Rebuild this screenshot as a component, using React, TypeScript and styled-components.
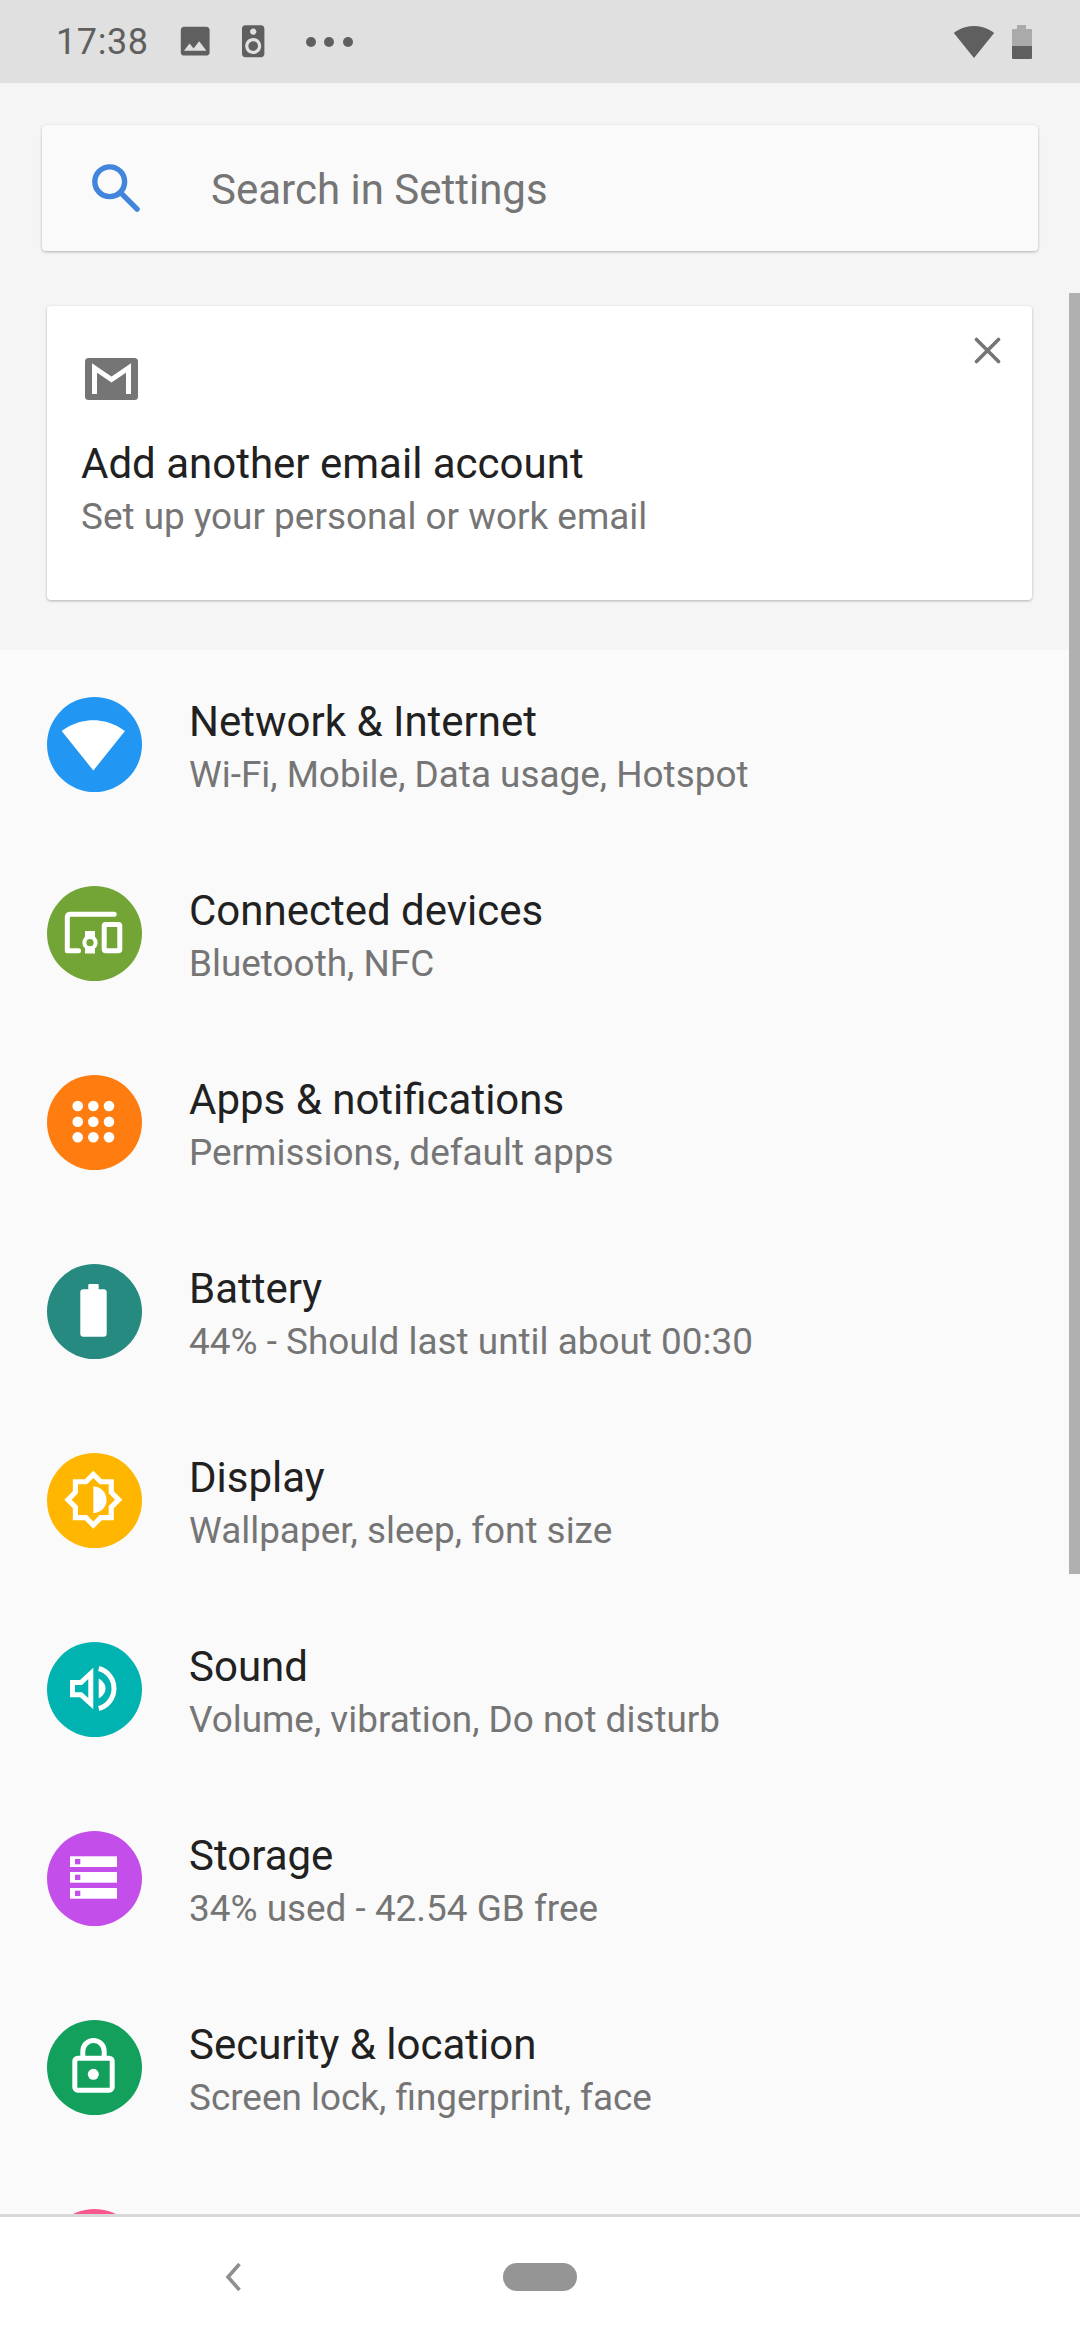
import type { ReactNode } from "react";
import styled, { createGlobalStyle } from "styled-components";

const GlobalStyle = createGlobalStyle`
  html, body {
    margin: 0;
    padding: 0;
    background: #fafafa;
  }

  * {
    box-sizing: border-box;
  }
`;

const Page = styled.div`
  display: flex;
  flex-direction: column;
  width: 1080px;
  height: 2340px;
  overflow: hidden;
  font-family: Roboto, "Liberation Sans", sans-serif;
`;

const StatusBar = styled.header`
  display: flex;
  align-items: center;
  flex-shrink: 0;
  height: 83px;
  padding: 0 48px 0 56px;
  background: #e0e0e0;
  color: #5f5f5f;
`;

const Clock = styled.span`
  width: 120px;
  font-size: 36px;
  letter-spacing: 0.6px;
`;

const StatusIcon = styled.svg`
  display: block;
  width: 38.4px;
  height: 38.4px;
  margin-right: 20px;
  fill: #5f5f5f;
`;

const Dots = styled.div`
  display: flex;
  gap: 8.5px;
  margin-left: 13px;
`;

const Dot = styled.span`
  width: 10px;
  height: 10px;
  border-radius: 50%;
  background: #5f5f5f;
`;

const StatusRight = styled.div`
  display: flex;
  align-items: center;
  gap: 17px;
  margin-left: auto;
`;

const Content = styled.main`
  position: relative;
  flex: 1;
  min-height: 0;
  overflow: hidden;
  background: #fafafa;
`;

const TopSection = styled.section`
  padding: 42px 42px 50px;
  background: #f5f5f5;
`;

const SearchBox = styled.div`
  display: flex;
  align-items: center;
  height: 126px;
  padding-left: 42px;
  background: #fafafa;
  border-radius: 4px;
  box-shadow: 0 1px 3px rgba(0, 0, 0, 0.28);
`;

const SearchIcon = styled.svg`
  display: block;
  flex-shrink: 0;
  width: 65px;
  height: 65px;
  margin-right: 62px;
`;

const Placeholder = styled.span`
  padding-top: 2px;
  font-size: 42px;
  color: #757575;
`;

const Card = styled.article`
  position: relative;
  display: flex;
  flex-direction: column;
  height: 294px;
  margin: 55px 6px 0 5px;
  padding: 52px 34px 0;
  background: #fff;
  border-radius: 4px;
  box-shadow: 0 1px 3px rgba(0, 0, 0, 0.28);
`;

const MailIcon = styled.svg`
  display: block;
  width: 53px;
  height: 42px;
  margin: 0 0 37px 4px;
`;

const CloseIcon = styled.svg`
  position: absolute;
  top: 31px;
  right: 31px;
  width: 27px;
  height: 27px;
`;

const Title = styled.div`
  font-size: 42px;
  line-height: 53px;
  color: #212121;
`;

const Subtitle = styled.div`
  font-size: 36.9px;
  line-height: 54px;
  color: #757575;
`;

const Row = styled.div`
  display: flex;
  align-items: center;
  height: 189px;
  padding-left: 47px;
`;

const Badge = styled.svg<{ $color: string }>`
  display: block;
  flex-shrink: 0;
  width: 95px;
  height: 95px;
  margin-right: 47px;
  border-radius: 50%;
  background: ${(p) => p.$color};
`;

const RowText = styled.div`
  padding-top: 8px;
`;

const ScrollThumb = styled.div`
  position: absolute;
  top: 210px;
  right: 0;
  width: 11px;
  height: 1281px;
  background: #b0b0b0;
`;

const NavBar = styled.nav`
  display: flex;
  align-items: center;
  flex-shrink: 0;
  height: 126px;
  padding: 0 0 3px 225px;
  background: #fff;
  border-top: 3px solid #d8d8d8;
`;

const BackIcon = styled.svg`
  display: block;
  width: 17px;
  height: 28px;
  margin-right: 261px;
`;

const HomePill = styled.span`
  width: 74px;
  height: 28px;
  border-radius: 14px;
  background: #959595;
`;

const mat = "translate(13.7 15) scale(2.72)";

type Item = {
  key: string;
  title?: string;
  sub?: string;
  color: string;
  icon?: ReactNode;
};

const items: Item[] = [
  {
    key: "network",
    title: "Network & Internet",
    sub: "Wi-Fi, Mobile, Data usage, Hotspot",
    color: "#2196f3",
    icon: (
      <path
        transform={mat}
        fill="#fff"
        d="M12.01 21.49L23.64 7c-.45-.34-4.93-4-11.64-4C5.28 3 .81 6.66.36 7l11.63 14.49.01.01.01-.01z"
      />
    ),
  },
  {
    key: "devices",
    title: "Connected devices",
    sub: "Bluetooth, NFC",
    color: "#72a536",
    icon: (
      <>
        <path
          d="M67.2 28.3H23.5Q20.3 28.3 20.3 31.5V64.7H31.5"
          fill="none"
          stroke="#fff"
          strokeWidth="5"
          strokeLinecap="round"
          strokeLinejoin="round"
        />
        <rect x="38" y="45" width="10" height="22.5" fill="#fff" />
        <circle cx="43" cy="56.7" r="7.6" fill="#fff" />
        <circle cx="43" cy="56.7" r="3.6" fill="#72a536" />
        <rect x="57.2" y="38.5" width="15.6" height="26.3" rx="1.5" fill="none" stroke="#fff" strokeWidth="5" />
      </>
    ),
  },
  {
    key: "apps",
    title: "Apps & notifications",
    sub: "Permissions, default apps",
    color: "#ff7d10",
    icon: (
      <g fill="#fff">
        {[31, 46.7, 62.3].map((cy) =>
          [30.7, 46.3, 62].map((cx) => <circle key={`${cx}-${cy}`} cx={cx} cy={cy} r="5.3" />),
        )}
      </g>
    ),
  },
  {
    key: "battery",
    title: "Battery",
    sub: "44% - Should last until about 00:30",
    color: "#268a80",
    icon: (
      <g fill="#fff">
        <rect x="41.3" y="20" width="10.4" height="8" rx="1" />
        <rect x="33.3" y="25.3" width="26.4" height="47.4" rx="3" />
      </g>
    ),
  },
  {
    key: "display",
    title: "Display",
    sub: "Wallpaper, sleep, font size",
    color: "#ffb600",
    icon: (
      <path
        transform="translate(15.6 16) scale(2.56)"
        fill="#fff"
        d="M20 15.31L23.31 12 20 8.69V4h-4.69L12 .69 8.69 4H4v4.69L.69 12 4 15.31V20h4.69L12 23.31 15.31 20H20v-4.69zm-2-.83V18h-3.52L12 20.48 9.52 18H6v-3.52L3.52 12 6 9.52V6h3.52L12 3.52 14.48 6H18v3.52L20.48 12 18 14.48zM12 6.8V17.2c2.87 0 5.2-2.33 5.2-5.2S14.87 6.8 12 6.8z"
      />
    ),
  },
  {
    key: "sound",
    title: "Sound",
    sub: "Volume, vibration, Do not disturb",
    color: "#00b3b0",
    icon: (
      <>
        <path
          fill="#fff"
          fillRule="evenodd"
          d="M23 38H33L46.3 25.7V67.3L33 55.3H23ZM28 43V50.3H35L41.3 56V37L35 43Z"
        />
        <path fill="#fff" d="M51.7 36.5C56 39 58.5 42.5 58.5 46.5C58.5 50.5 56 54 51.7 56.5Z" />
        <path
          fill="none"
          stroke="#fff"
          strokeWidth="5"
          d="M51.7 26.5C60.5 28.5 67 37 67 46.5C67 56 60.5 64.5 51.7 66.5"
        />
      </>
    ),
  },
  {
    key: "storage",
    title: "Storage",
    sub: "34% used - 42.54 GB free",
    color: "#c44eea",
    icon: (
      <>
        {[25.3, 41, 57].map((y) => (
          <g key={y}>
            <rect x="23" y={y} width="47" height="10.7" fill="#fff" />
            <rect x="28" y={y + 2.7} width="5.3" height="5.3" fill="#c44eea" />
          </g>
        ))}
      </>
    ),
  },
  {
    key: "security",
    title: "Security & location",
    sub: "Screen lock, fingerprint, face",
    color: "#12a05c",
    icon: (
      <>
        <rect x="27.8" y="38.2" width="37.4" height="32" rx="3" fill="none" stroke="#fff" strokeWidth="5" />
        <path d="M35.8 37V31.2A10.7 10.7 0 0 1 57.2 31.2V37" fill="none" stroke="#fff" strokeWidth="5" />
        <circle cx="46.3" cy="54.3" r="5.5" fill="#fff" />
      </>
    ),
  },
  // only the top of this badge shows above the nav bar
  { key: "next", color: "#f8588f" },
];

export default function App() {
  return (
    <Page>
      <GlobalStyle />
      <StatusBar>
        <Clock>17:38</Clock>
        <StatusIcon viewBox="0 0 24 24">
          <path d="M21 19V5c0-1.1-.9-2-2-2H5c-1.1 0-2 .9-2 2v14c0 1.1.9 2 2 2h14c1.1 0 2-.9 2-2zM8.5 13.5l2.5 3.01L14.5 12l4.5 6H5l3.5-4.5z" />
        </StatusIcon>
        <StatusIcon viewBox="0 0 24 24">
          <path d="M17 2H7c-1.1 0-2 .9-2 2v16c0 1.1.9 1.99 2 1.99L17 22c1.1 0 2-.9 2-2V4c0-1.1-.9-2-2-2zm-5 2c1.1 0 2 .9 2 2s-.9 2-2 2c-1.11 0-2-.9-2-2s.89-2 2-2zm0 16c-2.76 0-5-2.24-5-5s2.24-5 5-5 5 2.24 5 5-2.24 5-5 5zm0-8c-1.66 0-3 1.34-3 3s1.34 3 3 3 3-1.34 3-3-1.34-3-3-3z" />
        </StatusIcon>
        <Dots>
          <Dot />
          <Dot />
          <Dot />
        </Dots>
        <StatusRight>
          <svg width="42" height="32" viewBox="0 0 23.3 18.5">
            <path
              fill="#5f5f5f"
              transform="translate(-.36 -3)"
              d="M12.01 21.49L23.64 7c-.45-.34-4.93-4-11.64-4C5.28 3 .81 6.66.36 7l11.63 14.49.01.01.01-.01z"
            />
          </svg>
          <svg width="20" height="34" viewBox="0 0 20 34">
            <path fill="#aaaaaa" d="M5 0H14V4H19Q20 4 20 5V21H0V5Q0 4 1 4H5Z" />
            <path fill="#5f5f5f" d="M0 21H20V33Q20 34 19 34H1Q0 34 0 33Z" />
          </svg>
        </StatusRight>
      </StatusBar>

      <Content>
        <TopSection>
          <SearchBox>
            <SearchIcon viewBox="0 0 24 24" fill="none" stroke="#4285dc" strokeWidth="2" strokeLinecap="round">
              <circle cx="9.5" cy="9.5" r="5.5" />
              <path d="M13.6 13.6L19.6 19.6" />
            </SearchIcon>
            <Placeholder>Search in Settings</Placeholder>
          </SearchBox>

          <Card>
            <MailIcon viewBox="0 0 53 42">
              <rect width="53" height="42" rx="3.5" fill="#757575" />
              <path d="M9.5 36V10L26.5 21.5L43.5 10V36" fill="none" stroke="#fff" strokeWidth="5" />
            </MailIcon>
            <CloseIcon viewBox="0 0 27 27" stroke="#757575" strokeWidth="3.6" strokeLinecap="round">
              <path d="M2.5 2.5L24.5 24.5M24.5 2.5L2.5 24.5" />
            </CloseIcon>
            <Title>Add another email account</Title>
            <Subtitle>Set up your personal or work email</Subtitle>
          </Card>
        </TopSection>

        {items.map((item) => (
          <Row key={item.key}>
            <Badge $color={item.color} viewBox="0 0 95 95">
              {item.icon}
            </Badge>
            {item.title && (
              <RowText>
                <Title>{item.title}</Title>
                <Subtitle>{item.sub}</Subtitle>
              </RowText>
            )}
          </Row>
        ))}

        <ScrollThumb />
      </Content>

      <NavBar>
        <BackIcon viewBox="0 0 17 28" fill="none" stroke="#8f8f8f" strokeWidth="3.6">
          <path d="M14.5 1L3 14L14.5 27" />
        </BackIcon>
        <HomePill />
      </NavBar>
    </Page>
  );
}
